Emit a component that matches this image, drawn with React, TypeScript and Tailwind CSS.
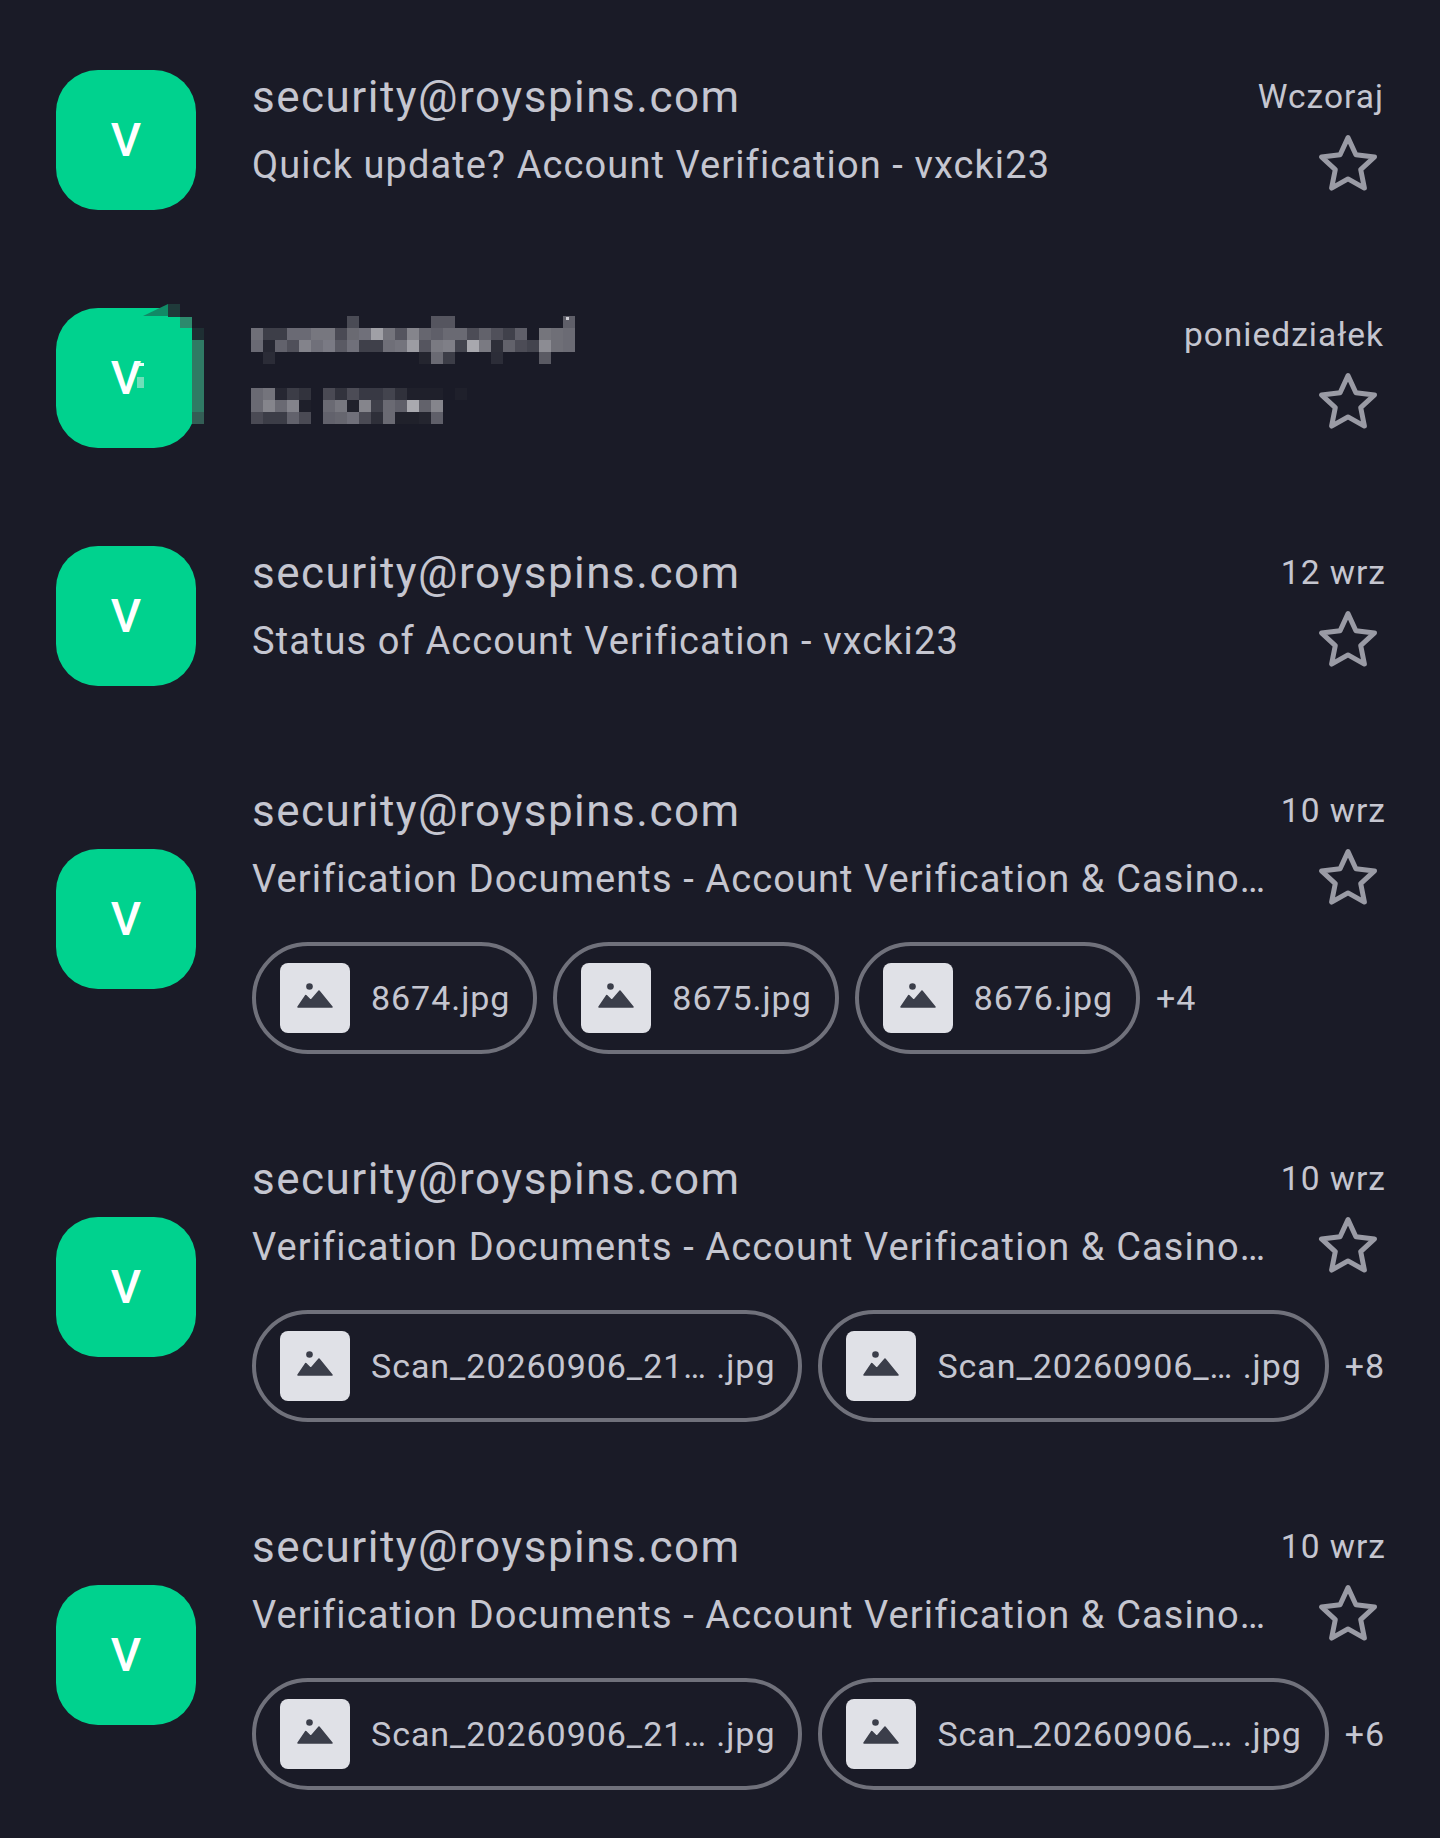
type Mail = {
  sender: string;
  subject: string;
  date: string;
  files?: string[];
  more?: string;
  hidden?: boolean;
};

const longSubject = "Verification Documents - Account Verification & Casino…";

const mails: Mail[] = [
  { sender: "security@royspins.com", subject: "Quick update? Account Verification - vxcki23", date: "Wczoraj" },
  { sender: "", subject: "", date: "poniedziałek", hidden: true },
  { sender: "security@royspins.com", subject: "Status of Account Verification - vxcki23", date: "12 wrz" },
  {
    sender: "security@royspins.com",
    subject: longSubject,
    date: "10 wrz",
    files: ["8674.jpg", "8675.jpg", "8676.jpg"],
    more: "+4",
  },
  {
    sender: "security@royspins.com",
    subject: longSubject,
    date: "10 wrz",
    files: ["Scan_20260906_21… .jpg", "Scan_20260906_… .jpg"],
    more: "+8",
  },
  {
    sender: "security@royspins.com",
    subject: longSubject,
    date: "10 wrz",
    files: ["Scan_20260906_21… .jpg", "Scan_20260906_… .jpg"],
    more: "+6",
  },
];

// censored sender / subject, one 12px block per entry, "" = background
const senderBlocks: string[][] = [
  ["", "", "", "", "", "", "", "", "#4a4b55", "", "", "", "", "", "", "#55555f", "#55555f", "", "", "", "", "", "", "", "", "", "#5f5f69"],
  ["#6f6f78", "#3d3e48", "#3d3e48", "#6a6a74", "#6a6a74", "#77777f", "#77777f", "#4a4a54", "#6a6a72", "#70707a", "#a0a0a6", "#74747c", "#55555f", "#85858c", "#66666f", "#5f5f69", "#6a6a73", "#6a6a73", "#4c4c56", "#62626b", "#50505a", "#40414b", "#5f5f69", "", "#75757c", "#6f6f77", "#6b6b74"],
  ["#6a6a74", "#262732", "#62626c", "#50505a", "#83838b", "#70707a", "#7a7a84", "#5a5a64", "#70707a", "#3f404a", "#3f404a", "#6f6f78", "#74747d", "#9c9ca3", "#55555f", "#7a7a82", "#7f7f87", "#43444e", "#a8a8ae", "#7a7a82", "#2e2f39", "#62626b", "#4c4c56", "#43444e", "#8c8c93", "#6f6f77", "#6b6b74"],
  ["", "#2b2c37", "", "", "", "", "", "", "", "", "", "", "", "", "#24252f", "#6a6a73", "#3c3d47", "", "", "", "#2c2d38", "", "", "", "#5a5a63", "", ""],
];

const subjectBlocks: string[][] = [
  ["#6a6a73", "#74747c", "#262732", "#3c3d47", "#32333d", "", "#4a4a54", "#32333d", "#4c4c56", "#383944", "#383944", "#43444e", "#30313b", "#1f202b", "#1f202b", "#1f202b", "", "#1f202b"],
  ["#6a6a73", "#85858c", "#6a6a73", "#83838b", "#1e1f2a", "", "#6a6a73", "#77777f", "#20212b", "#85858c", "#3f404a", "#6a6a73", "#5f5f69", "#a9a9af", "#62626b", "#85858c", "", ""],
  ["#4a4a54", "#3c3d47", "#3c3d47", "#62626c", "#4a4a54", "", "#62626c", "#66666f", "#70707a", "#4a4a54", "#2e2f39", "#6a6a73", "#20212b", "#20212b", "#24252f", "#5f5f69", "", ""],
];

function Blocks({ rows }: { rows: string[][] }) {
  return (
    <div className="flex flex-col ml-[-1px]">
      {rows.map((row, y) => (
        <div key={y} className="flex h-3">
          {row.map((color, x) => (
            <div key={x} className="w-3 h-3" style={{ backgroundColor: color || "transparent" }} />
          ))}
        </div>
      ))}
    </div>
  );
}

function StarIcon() {
  return (
    <svg width="64" height="64" viewBox="0 0 64 64" fill="none" stroke="#9a9ba5" strokeWidth="5" strokeLinejoin="round" className="shrink-0 mr-1 mb-[3px]">
      <polygon points="32,5.6 39.9,22.7 58.5,24.9 44.7,37.6 48.4,56.1 32,46.9 15.6,56.1 19.3,37.6 5.5,24.9 24.1,22.7" />
    </svg>
  );
}

function ImageGlyph() {
  return (
    <svg width="36" height="25" viewBox="0 0 36 25" fill="#3b3e4a" stroke="#3b3e4a" strokeLinejoin="round" className="mb-[6px]">
      <circle cx="12.5" cy="3.5" r="3.3" stroke="none" />
      <path strokeWidth="1.5" d="M1 24 L8.8 12.5 L13.8 17.5 L22 8 L35 24 Z" />
    </svg>
  );
}

function Attachment({ name }: { name: string }) {
  return (
    <div className="flex items-center h-[112px] min-w-[285px] rounded-full border-4 border-[#70717b] pl-6 pr-[23px] gap-[21px] shrink-0">
      <div className="w-[70px] h-[70px] rounded-lg bg-[#e0e1e7] flex items-center justify-center">
        <ImageGlyph />
      </div>
      <span className="text-[34px] tracking-[0.028em] text-[#c5c6d0] whitespace-nowrap">{name}</span>
    </div>
  );
}

function Avatar({ patched }: { patched?: boolean }) {
  return (
    <div className="relative w-[140px] h-[140px] rounded-[42px] bg-[#00d28e] flex items-center justify-center shrink-0 text-white text-[47px] font-medium">
      V
      {patched && (
        <>
          {/* leftovers of the censoring over the avatar's right edge */}
          <div className="absolute left-[81px] top-[55px] w-[7px] h-[3px] bg-[#e8fff6]" />
          <div className="absolute left-[81px] top-[69px] w-[7px] h-[11px] bg-[#6fdfb9]" />
          <div className="absolute left-[90px] top-0 w-[34px] h-5 bg-[#00d28e]" />
          <div className="absolute left-[90px] top-5 w-[46px] h-[105px] rounded-br-[20px] bg-[#00d28e]" />
          <div className="absolute left-[136px] top-5 w-1 h-[120px] bg-[#1a1b27]" />
          <div className="absolute left-[87px] top-[-4px] w-[25px] h-3 bg-[#118a66] [clip-path:polygon(0_100%,100%_0,100%_100%)]" />
          <div className="absolute left-[112px] top-[-4px] w-3 h-[13px] bg-[#1f3a3a]" />
          <div className="absolute left-[124px] top-[9px] w-3 h-[11px] bg-[#2d8a6d]" />
          <div className="absolute left-[136px] top-5 w-3 h-3 bg-[#1e2f33]" />
          <div className="absolute left-[136px] top-8 w-3 h-[72px] bg-[#2f7a64]" />
          <div className="absolute left-[136px] top-[104px] w-3 h-3 bg-[#335e55]" />
        </>
      )}
    </div>
  );
}

function Row({ mail }: { mail: Mail }) {
  return (
    <div className="flex items-center gap-14 py-[49px]">
      <Avatar patched={mail.hidden} />
      <div className="flex-1 min-w-0 min-h-[140px]">
        <div className="flex items-center justify-between h-[54px]">
          {mail.hidden ? (
            <div className="relative self-start mt-2">
              <Blocks rows={senderBlocks} />
              <div className="absolute left-[314px] top-[1px] w-[3px] h-[3px] bg-[#cfcfd5]" />
            </div>
          ) : (
            <span className="text-[44px] tracking-[0.034em] text-[#c5c6d0] whitespace-nowrap">{mail.sender}</span>
          )}
          <span className={`text-[33.5px] tracking-[0.03em] text-[#c5c6d0] ${mail.date.includes("wrz") ? "mr-[-2px]" : ""}`}>{mail.date}</span>
        </div>
        <div className="flex items-center justify-between h-[82px]">
          {mail.hidden ? (
            <div className="mt-[6px]">
              <Blocks rows={subjectBlocks} />
            </div>
          ) : (
            <span className="text-[38px] tracking-[0.029em] text-[#c5c6d0] whitespace-nowrap">{mail.subject}</span>
          )}
          <StarIcon />
        </div>
        {mail.files && (
          <div className="flex items-center gap-4 mt-[22px]">
            {mail.files.map((f, i) => (
              <Attachment key={i} name={f} />
            ))}
            <span className="text-[34px] tracking-[0.028em] text-[#c5c6d0]">{mail.more}</span>
          </div>
        )}
      </div>
    </div>
  );
}

export default function App() {
  return (
    <div className="w-[1440px] h-[1838px] overflow-hidden bg-[#1a1b27] px-14 pt-[21px] font-['Roboto',sans-serif]">
      {mails.map((m, i) => (
        <Row key={i} mail={m} />
      ))}
    </div>
  );
}
